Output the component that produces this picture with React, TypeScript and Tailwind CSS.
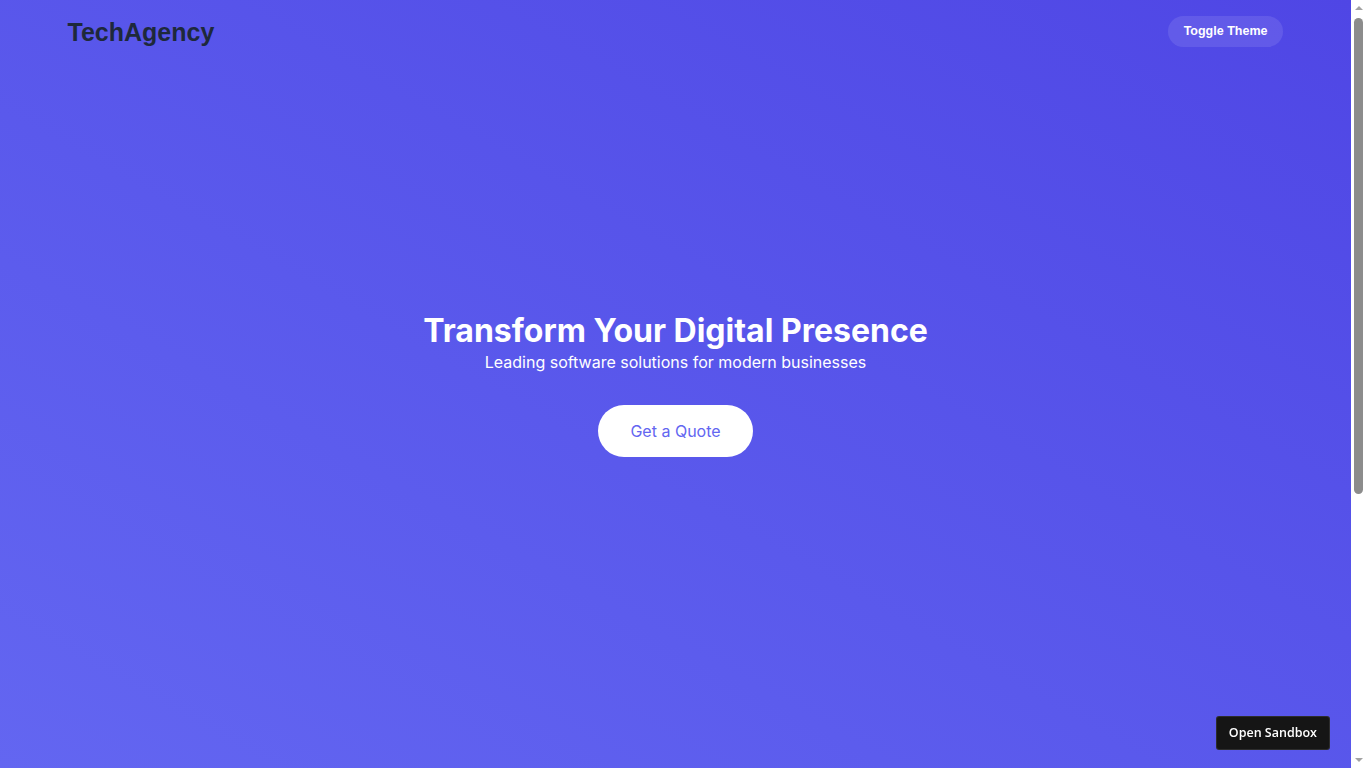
export default function App() {
  return (
    <div className="h-screen flex overflow-hidden font-['Inter',sans-serif]">
      <main className="flex-1 overflow-y-auto [scrollbar-width:none]">
        <section className="relative h-screen flex flex-col items-center justify-center text-center text-white bg-gradient-to-tr from-[#6366f1] to-[#4f46e5]">
          {/* top nav sits over the hero */}
          <nav className="absolute top-0 left-0 right-0 flex items-center justify-between px-[5%] py-4">
            <div className="font-['Liberation_Sans',Arial,sans-serif] text-[25px] font-bold text-[#1e293b] leading-[30px]">
              TechAgency
            </div>
            <button className="font-['Liberation_Sans',Arial,sans-serif] text-[12.5px] font-bold text-white bg-white/10 rounded-full px-4 h-[31px]">
              Toggle Theme
            </button>
          </nav>

          <h1 className="text-[32px] font-bold leading-[38px]">Transform Your Digital Presence</h1>
          <p className="text-[16px] leading-[22px] mt-[1px]">Leading software solutions for modern businesses</p>
          <button className="mt-[32px] bg-white text-[#6366f1] text-[16px] rounded-full px-8 h-[52px]">
            Get a Quote
          </button>
        </section>

        <section className="h-[423px] bg-white" />
      </main>

      {/* page scrollbar */}
      <aside className="w-[15px] shrink-0 bg-white flex flex-col items-center">
        <div className="h-[16px] flex items-center justify-center">
          <div className="w-0 h-0 border-x-[4px] border-x-transparent border-b-[4px] border-b-[#a3a3a3]" />
        </div>
        <div className="flex-1 w-full flex flex-col items-center pt-[2px]">
          <div className="w-[9px] h-[476px] rounded-full bg-[#8c8c8c]" />
        </div>
        <div className="h-[16px] flex items-center justify-center">
          <div className="w-0 h-0 border-x-[4px] border-x-transparent border-t-[4px] border-t-[#a3a3a3]" />
        </div>
      </aside>

      <button className="fixed bottom-[18px] right-[36px] bg-[#151515] text-white text-[12.5px] font-semibold font-['Open_Sans',sans-serif] rounded-[3px] px-3 h-[34px] border border-white/10">
        Open Sandbox
      </button>
    </div>
  )
}
